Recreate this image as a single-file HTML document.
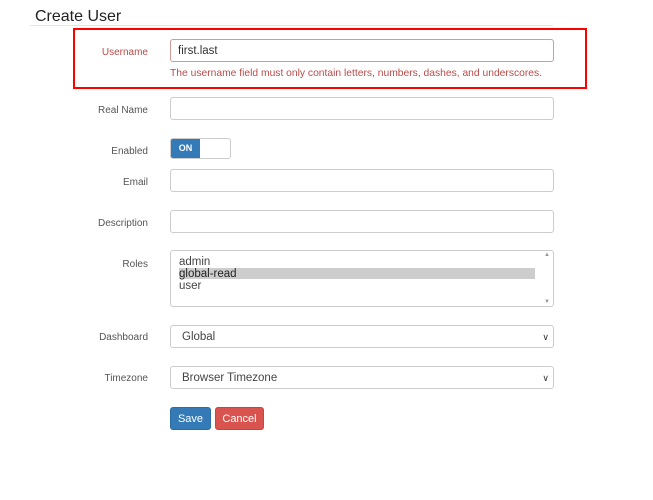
<!DOCTYPE html>
<html><head><style>
body{margin:0;width:653px;height:500px;background:#fff;font-family:"Liberation Sans",Tahoma,sans-serif;position:relative;overflow:hidden}
.a{position:absolute}
.lbl{position:absolute;right:505px;font-size:10px;color:#555;text-align:right;white-space:nowrap}
.inp{position:absolute;left:170px;width:382px;height:21px;border:1px solid #ccc;border-radius:3px;background:#fff}
.sel{font-size:11.5px;color:#444;line-height:23px;padding-left:11px;box-sizing:border-box;height:23px;width:384px}
.chev{position:absolute;right:4px;top:0;font-size:9px;color:#333}
</style></head><body>
<div class="a" style="left:35px;top:8px;font-size:16px;color:#222">Create User</div>
<div class="a" style="left:30px;top:25px;width:523px;height:1px;background:#e4e4e4"></div>
<div class="a" style="left:73px;top:28px;width:510px;height:57px;border:2px solid #f00"></div>
<div class="lbl" style="top:47px;color:#b94a48">Username</div>
<div class="inp" style="top:39px;border-color:#d49a98;font-size:11.5px;color:#333;line-height:23px;padding-left:7px;width:375px">first.last</div>
<div class="a" style="left:170px;top:68px;font-size:10.3px;color:#b94a48">The username field must only contain letters, numbers, dashes, and underscores.</div>
<div class="lbl" style="top:105px">Real Name</div>
<div class="inp" style="top:97px"></div>
<div class="lbl" style="top:146px">Enabled</div>
<div class="a" style="left:170px;top:138px;width:59px;height:19px;border:1px solid #ccc;border-radius:3px;overflow:hidden">
<div style="width:29px;height:19px;background:#337ab7;color:#fff;font-size:9px;font-weight:bold;line-height:19px;text-align:center">ON</div></div>
<div class="lbl" style="top:177px">Email</div>
<div class="inp" style="top:169px"></div>
<div class="lbl" style="top:218px">Description</div>
<div class="inp" style="top:210px"></div>
<div class="lbl" style="top:259px">Roles</div>
<div class="inp" style="top:250px;height:55px;font-size:11.5px;color:#444">
<div class="a" style="left:8px;top:5px">admin</div>
<div class="a" style="left:8px;top:17px;width:356px;height:11px;background:#cdcdcd;line-height:12px;color:#222">global-read</div>
<div class="a" style="left:8px;top:29px">user</div>
<div class="a" style="right:3px;top:1px;font-size:6px;color:#999">▲</div>
<div class="a" style="right:3px;bottom:1px;font-size:6px;color:#999">▼</div>
</div>
<div class="lbl" style="top:332px">Dashboard</div>
<div class="inp sel" style="top:325px">Global<span class="chev">&#x2228;</span></div>
<div class="lbl" style="top:373px">Timezone</div>
<div class="inp sel" style="top:366px">Browser Timezone<span class="chev">&#x2228;</span></div>
<div class="a" style="left:170px;top:407px;width:39px;height:21px;background:#337ab7;border:1px solid #2e6da4;border-radius:3px;color:#fff;font-size:11px;line-height:22px;text-align:center">Save</div>
<div class="a" style="left:215px;top:407px;width:47px;height:21px;background:#d9534f;border:1px solid #d43f3a;border-radius:3px;color:#fff;font-size:11px;line-height:22px;text-align:center">Cancel</div>
</body></html>
